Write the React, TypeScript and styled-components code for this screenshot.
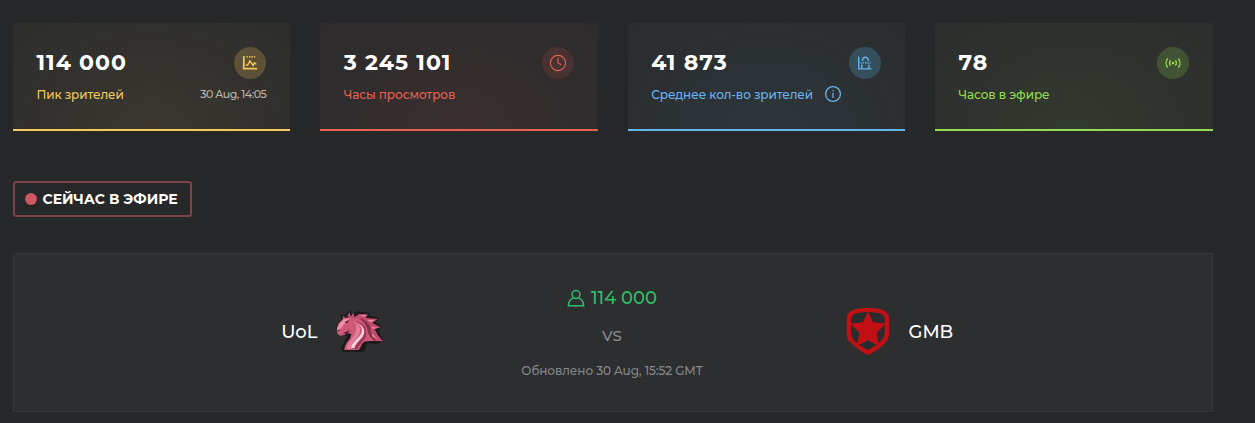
import React from "react";
import styled, {createGlobalStyle} from "styled-components";


interface IStatProps {
    value: string;
    label: string;
    date?: string;
    info?: boolean;
    color: string;
    rgb: string;
    iconAlpha: number;
    icon: React.ReactNode;
}

const PeakIcon = () => (
    <svg width="16" height="16" viewBox="0 0 16 16" fill="none" stroke="currentColor">
        <path d="M1.8 1v12.7H15" strokeWidth="1.7"/>
        <path d="M3.8 10.2 5.6 10 8 5.8l3 4.6 1.6-2.6 1.6 1.4" strokeWidth="1.4"/>
        <path d="M4.3 1.8h9" strokeWidth="1.3" strokeDasharray="1.7 .8"/>
    </svg>
);

const ClockIcon = () => (
    <svg width="18" height="18" viewBox="0 0 18 18" fill="none" stroke="currentColor" strokeWidth="1.1">
        <circle cx="9" cy="9" r="7.6"/>
        <path d="M9 4v5l3.2 1.8"/>
    </svg>
);

const AverageIcon = () => (
    <svg width="16" height="16" viewBox="0 0 16 16" fill="none" stroke="currentColor">
        <path d="M1.7 1.5v12.4h12.8" strokeWidth="1.3"/>
        <path d="M4.8 13.5V9.7M12 13.5V9.7M5.3 6C6.2.9 10.6.9 11.500 6" strokeWidth="1.4"/>
        <path d="M3.200 7.800h10.500" strokeWidth="1.2" strokeDasharray="1.5 .9"/>
    </svg>
);

const AirIcon = () => (
    <svg width="18" height="16" viewBox="0 0 18 16" fill="none" stroke="currentColor" strokeWidth="1.3">
        <circle cx="9" cy="8" r="1.3" fill="currentColor" stroke="none"/>
        <path d="M6.6 5.4a4 4 0 0 0 0 5.2M11.4 5.4a4 4 0 0 1 0 5.2"/>
        <path d="M3.7 3.5a7 7 0 0 0 0 9M14.3 3.5a7 7 0 0 1 0 9"/>
    </svg>
);

const InfoIcon = () => (
    <svg width="18" height="18" viewBox="0 0 18 18" fill="none" stroke="currentColor" strokeWidth="1.3">
        <circle cx="9" cy="9" r="7.4"/>
        <path d="M9 7.7v5.2M9 4.9v1.4"/>
    </svg>
);

const UserIcon = () => (
    <svg width="18" height="18" viewBox="0 0 18 18" fill="none" stroke="currentColor" strokeWidth="1.5">
        <circle cx="9" cy="5.6" r="4"/>
        <path d="M6.6 8.9C3.3 10.1 1.500 12.800 1.300 16.700h15.400c-.2-3.900-2-6.600-5.300-7.800"/>
    </svg>
);

const HorseLogo = () => (
    <svg width="50" height="50" viewBox="9 9 150 150">
        <path d="M32 134 52 98 42 94 28 94 17 82 22 60 34 46 32 32 44 34 62 18 66 30 82 22 118 26 116 34 146 42 138 56 156 68 144 80 162 112 136 120 112 118 102 144 40 144Z" fill="#1a191b"/>
        <path d="M58 42 70 27l4 12 14-9 26 1-7 10 36 4-16 12 25 13-18 6 10 18 15 18-28-1-18-8-24-2Z" fill="#c24c6d"/>
        <path d="m20 76 5-17 14-15-1-9 9 7 12-17 3 17 23 2c18 6 29 21 31 38l20 27c-14 5-29 0-37 7-6 6-7 16-14 22H43c1-15 7-24 17-34l4-14-11-2-12 6-12 1-8-8Z" fill="#cf5879"/>
        <path d="m21 75 6-15 15-15 18-2-18 18-8 12-9 5Z" fill="#eb91a8"/>
        <path d="M65 49c14 6 17 20 12 35-4 15-23 24-27 51h12c1-16 15-28 25-43 8-16 2-33-22-43Z" fill="#e47e99"/>
        <path d="M76 51c24 10 29 28 16 45-10 13-23 24-26 39h17c3-14 17-22 24-36 8-22-5-43-31-48Z" fill="#9f3455"/>
        <path d="M80 56c19 11 20 27 8 41-10 12-23 21-25 36h10c3-14 16-23 25-35 11-17 3-34-18-42Z" fill="#f6d2da"/>
        <path d="M88 42c21 4 33 19 34 37 1 15 11 23 18 34-11-5-22-13-25-25-3-18-10-33-27-46Z" fill="#87304c"/>
        <path d="m90 33 21 1-9 5ZM112 48l24-1-14 8ZM123 68l22 3-17 3ZM126 87l15 19-14-9Z" fill="#e98da4"/>
        <path d="M44 54 58 48 51 58ZM23 77l6 1-3 5ZM46 42l9-8 1 7ZM38 88l22-9-8 10Z" fill="#52182e"/>
    </svg>
);

const ShieldLogo = () => (
    <svg width="50" height="50" viewBox="24 21 150 150">
        <path d="M59 28q41-10 79 0 22 7 24 26v47q0 16-12 28-22 23-51 36-29-14-52-37Q35 118 35 101V54q2-19 24-26Z" fill="#c01014"/>
        <path d="M65 40q34-8 67 0 16 4 17 18v41q0 12-9 22-17 18-41 29-25-11-42-29-9-10-9-22V59q2-16 17-19Z" fill="#292b2e"/>
        <path d="m99 34 15 32 38 5-27 27 7 40-33-17-33 17 7-40-27-27 38-5Z" fill="#c01014"/>
    </svg>
);

const stats: Array<IStatProps> = [
    {
        value: "114 000", label: "Пик зрителей", date: "30 Aug, 14:05",
        color: "#f5c85c", rgb: "245, 200, 92", iconAlpha: 0.22, icon: <PeakIcon/>
    },
    {
        value: "3 245 101", label: "Часы просмотров",
        color: "#e8614f", rgb: "232, 90, 79", iconAlpha: 0.13, icon: <ClockIcon/>
    },
    {
        value: "41 873", label: "Среднее кол-во зрителей", info: true,
        color: "#65b5ef", rgb: "80, 175, 220", iconAlpha: 0.25, icon: <AverageIcon/>
    },
    {
        value: "78", label: "Часов в эфире",
        color: "#96dc50", rgb: "150, 220, 80", iconAlpha: 0.2, icon: <AirIcon/>
    }
];

const StatCard: React.FC<IStatProps> = (stat) => {
    return (
        <Card $color={stat.color} $rgb={stat.rgb}>
            <CardRow $height={32}>
                <Value>{stat.value}</Value>
                <IconCircle $rgb={stat.rgb} $alpha={stat.iconAlpha}>{stat.icon}</IconCircle>
            </CardRow>
            <CardRow $height={30}>
                <Label>
                    <span>{stat.label}</span>
                    {stat.info && <InfoIcon/>}
                </Label>
                {stat.date && <DateText>{stat.date}</DateText>}
            </CardRow>
        </Card>
    )
}

const App: React.FC = () => {
    return (
        <Page>
            <GlobalStyle/>
            <Cards>
                {stats.map((stat, index: number) => <StatCard key={`stat-${index}`} {...stat}/>)}
            </Cards>
            <LiveBadge><LiveDot/><LiveText>СЕЙЧАС В ЭФИРЕ</LiveText></LiveBadge>
            <Match>
                <Team $align="flex-end">
                    <TeamName>UoL</TeamName>
                    <HorseLogo/>
                </Team>
                <MatchInfo>
                    <Viewers><UserIcon/><ViewersText>114 000</ViewersText></Viewers>
                    <Versus>VS</Versus>
                    <Updated>Обновлено 30 Aug, 15:52 GMT</Updated>
                </MatchInfo>
                <Team $align="flex-start">
                    <ShieldLogo/>
                    <TeamName>GMB</TeamName>
                </Team>
            </Match>
        </Page>
    )
}

export default App;

const GlobalStyle = createGlobalStyle`
  body {
    margin: 0;
    background: #262729;
    font-family: Montserrat, Inter, "Noto Sans", sans-serif;
  }

  * {
    box-sizing: border-box;
  }

  svg {
    display: block;
    flex: none;
  }
`;

const Page = styled.main`
  width: 1255px;
  height: 423px;
  padding: 23px 42px 0 13px;
  overflow: hidden;
  background: #262729;
`;

const Cards = styled.section`
  display: grid;
  grid-template-columns: repeat(4, 277.4px);
  gap: 30px;
`;

const Card = styled.article<{ $color: string; $rgb: string }>`
  height: 108px;
  padding: 24px 24px 0 23.4px;
  border-bottom: 2px solid ${({$color}) => $color};
  color: ${({$color}) => $color};
  background: radial-gradient(ellipse at 50% 100%, rgba(${({$rgb}) => $rgb}, 0.085), rgba(${({$rgb}) => $rgb}, 0.035) 60%, rgba(${({$rgb}) => $rgb}, 0.015) 100%), #2a2b2c;
`;

const CardRow = styled.div<{ $height: number }>`
  display: flex;
  align-items: center;
  justify-content: space-between;
  height: ${({$height}) => $height}px;
  white-space: nowrap;
`;

const Value = styled.strong`
  margin-top: -1px;
  color: #fff;
  font-size: 22px;
  font-weight: 700;
  letter-spacing: 1px;
`;

const IconCircle = styled.span<{ $rgb: string; $alpha: number }>`
  display: flex;
  align-items: center;
  justify-content: center;
  width: 32px;
  height: 32px;
  border-radius: 50%;
  background: rgba(${({$rgb, $alpha}) => `${$rgb}, ${$alpha}`});
`;

const Label = styled.div`
  display: flex;
  align-items: center;
  gap: 11px;
  font-size: 12px;
  font-weight: 500;
  letter-spacing: -0.08px;
`;

const DateText = styled.time`
  color: #b9b5ac;
  font-size: 11px;
  font-weight: 500;
  letter-spacing: -0.5px;
`;

const LiveBadge = styled.div`
  display: flex;
  align-items: center;
  gap: 5.5px;
  width: 179px;
  height: 36px;
  margin-top: 50px;
  padding-left: 10px;
  border: 2px solid #7d4248;
  border-radius: 3px;
`;

const LiveDot = styled.i`
  width: 12px;
  height: 12px;
  border-radius: 50%;
  background: #cd5861;
`;

const LiveText = styled.strong`
  color: #fff;
  font-size: 14px;
  font-weight: 700;
  white-space: nowrap;
`;

const Match = styled.section`
  display: grid;
  grid-template-columns: 1fr 460px 1fr;
  align-items: center;
  height: 159px;
  margin-top: 36px;
  border: 1px solid #36383a;
  background: #2d2e30;
`;

const Team = styled.div<{ $align: string }>`
  display: flex;
  align-items: center;
  justify-content: ${({$align}) => $align};
  gap: 15.5px;
  margin-top: -1px;
`;

const TeamName = styled.span`
  color: #fff;
  font-size: 18px;
  font-weight: 500;
`;

const MatchInfo = styled.div`
  display: flex;
  flex-direction: column;
  align-items: center;
  margin-left: -2px;
  white-space: nowrap;
`;

const Viewers = styled.div`
  display: flex;
  align-items: center;
  gap: 6px;
  height: 38px;
  color: #32bd68;
`;

const ViewersText = styled.span`
  font-size: 18px;
  font-weight: 500;
`;

const Versus = styled.span`
  color: #8b8c8e;
  font-size: 15px;
  font-weight: 500;
  line-height: 38px;
`;

const Updated = styled.span`
  color: #858688;
  font-size: 12px;
  font-weight: 500;
  letter-spacing: -0.08px;
  line-height: 32px;
`;
